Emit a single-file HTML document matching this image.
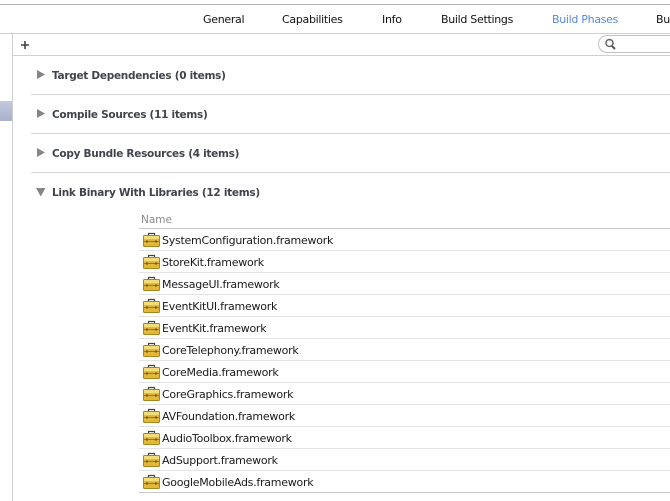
<!DOCTYPE html>
<html><head><meta charset="utf-8">
<style>
html,body{margin:0;padding:0;background:#fff;overflow:hidden}
body{width:670px;height:501px;position:relative;overflow:hidden;font-family:"DejaVu Sans","Liberation Sans",sans-serif}
.l{position:absolute;height:1px;background:#d6d6d6}
.t{position:absolute;white-space:nowrap;font-size:11px;line-height:14px;color:#111}
.tab{top:13px;letter-spacing:-.3px}
.h{font-weight:bold;font-size:10.5px;color:#3f444c;letter-spacing:-.28px;left:52px}
.a{position:absolute}
.n{left:162px;letter-spacing:-.25px;color:#1a1a1a}
svg.i{position:absolute;left:143px;width:17px;height:15px}
</style></head><body>
<div class="l" style="left:0;top:4px;width:670px;background:#b4b4b4"></div>
<div class="l" style="left:0;top:33px;width:670px;background:#cfcfcf"></div>
<div class="l" style="left:12px;top:55px;width:658px;background:#cfcfcf"></div>
<div class="a" style="left:12px;top:33px;width:1px;height:468px;background:#cfcfcf"></div>
<div class="a" style="left:0;top:101px;width:12px;height:20px;background:linear-gradient(#c3c9df,#a9b0cd)"></div>

<span class="t tab" style="left:203px">General</span>
<span class="t tab" style="left:282px">Capabilities</span>
<span class="t tab" style="left:382px">Info</span>
<span class="t tab" style="left:441px">Build Settings</span>
<span class="t tab" style="left:552px;color:#5b87d6">Build Phases</span>
<span class="t tab" style="left:656px;width:14px;overflow:hidden">Bu</span>

<svg class="a" style="left:21px;top:41px" width="8" height="8"><path d="M4 0v8M0 4h8" stroke="#444" stroke-width="1.600" fill="none"/></svg>

<svg class="a" style="left:597px;top:35px" width="73" height="19">
<path d="M73 .5H10a8.500 8.500 0 0 0 0 17H73" fill="#fff" stroke="#c2c2c2"/>
<circle cx="12.500" cy="8" r="3.500" fill="none" stroke="#666" stroke-width="1.500"/>
<path d="M15 11l3 3" stroke="#555" stroke-width="2"/>
</svg>

<svg class="a" style="left:37px;top:70px" width="8" height="10"><path d="M0 0L8 4.500L0 9Z" fill="#858585"/></svg>
<span class="t h" style="top:69px">Target Dependencies (0 items)</span>
<div class="l" style="left:31px;top:94px;width:639px"></div>

<svg class="a" style="left:37px;top:109px" width="8" height="10"><path d="M0 0L8 4.500L0 9Z" fill="#858585"/></svg>
<span class="t h" style="top:108px">Compile Sources (11 items)</span>
<div class="l" style="left:31px;top:133px;width:639px"></div>

<svg class="a" style="left:37px;top:148px" width="8" height="10"><path d="M0 0L8 4.500L0 9Z" fill="#858585"/></svg>
<span class="t h" style="top:147px">Copy Bundle Resources (4 items)</span>
<div class="l" style="left:31px;top:172px;width:639px"></div>

<svg class="a" style="left:36px;top:188px" width="10" height="9"><path d="M0 0H9.500L4.750 8.500Z" fill="#858585"/></svg>
<span class="t h" style="top:186px">Link Binary With Libraries (12 items)</span>

<span class="t" style="left:141px;top:213px;font-size:10.5px;color:#8a8a8a">Name</span>
<div class="l" style="left:139px;top:228px;width:531px;background:#c8c8c8"></div>

<svg width="0" height="0" style="position:absolute"><defs><g id="b">
<path d="M5.500 3.500V1.500h6v2" fill="none" stroke="#4a4330" stroke-width="1.200"/>
<rect x=".5" y="3.500" width="16" height="11" rx="1" fill="#e3b83a" stroke="#a5861f"/>
<rect x="1" y="4" width="15" height="3" fill="#f3dc7a"/>
<path d="M1 9.500h15" stroke="#94781f"/>
<rect x="3" y="8.500" width="2" height="2" fill="#6d5a1a"/><rect x="12" y="8.500" width="2" height="2" fill="#6d5a1a"/>
</g></defs></svg>

<svg class="i" style="top:232px"><use href="#b"/></svg><span class="t n" style="top:234px">SystemConfiguration.framework</span><div class="l" style="left:139px;top:250px;width:531px;background:#e4e4e4"></div>
<svg class="i" style="top:254px"><use href="#b"/></svg><span class="t n" style="top:256px">StoreKit.framework</span><div class="l" style="left:139px;top:272px;width:531px;background:#e4e4e4"></div>
<svg class="i" style="top:276px"><use href="#b"/></svg><span class="t n" style="top:278px">MessageUI.framework</span><div class="l" style="left:139px;top:294px;width:531px;background:#e4e4e4"></div>
<svg class="i" style="top:298px"><use href="#b"/></svg><span class="t n" style="top:300px">EventKitUI.framework</span><div class="l" style="left:139px;top:316px;width:531px;background:#e4e4e4"></div>
<svg class="i" style="top:320px"><use href="#b"/></svg><span class="t n" style="top:322px">EventKit.framework</span><div class="l" style="left:139px;top:338px;width:531px;background:#e4e4e4"></div>
<svg class="i" style="top:342px"><use href="#b"/></svg><span class="t n" style="top:344px">CoreTelephony.framework</span><div class="l" style="left:139px;top:360px;width:531px;background:#e4e4e4"></div>
<svg class="i" style="top:364px"><use href="#b"/></svg><span class="t n" style="top:366px">CoreMedia.framework</span><div class="l" style="left:139px;top:382px;width:531px;background:#e4e4e4"></div>
<svg class="i" style="top:386px"><use href="#b"/></svg><span class="t n" style="top:388px">CoreGraphics.framework</span><div class="l" style="left:139px;top:404px;width:531px;background:#e4e4e4"></div>
<svg class="i" style="top:408px"><use href="#b"/></svg><span class="t n" style="top:410px">AVFoundation.framework</span><div class="l" style="left:139px;top:426px;width:531px;background:#e4e4e4"></div>
<svg class="i" style="top:430px"><use href="#b"/></svg><span class="t n" style="top:432px">AudioToolbox.framework</span><div class="l" style="left:139px;top:448px;width:531px;background:#e4e4e4"></div>
<svg class="i" style="top:452px"><use href="#b"/></svg><span class="t n" style="top:454px">AdSupport.framework</span><div class="l" style="left:139px;top:470px;width:531px;background:#e4e4e4"></div>
<svg class="i" style="top:474px"><use href="#b"/></svg><span class="t n" style="top:476px">GoogleMobileAds.framework</span><div class="l" style="left:139px;top:492px;width:531px;background:#c8c8c8"></div>
</body></html>
